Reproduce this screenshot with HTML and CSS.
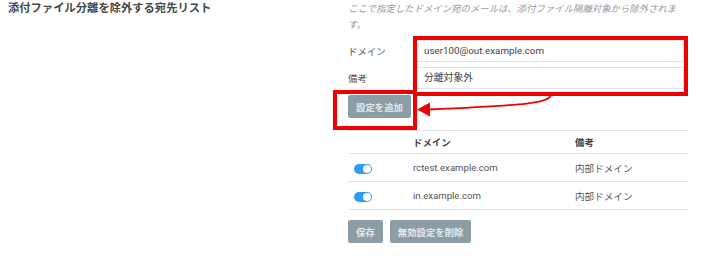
FILE: index.html
```html
<!DOCTYPE html>
<html lang="ja">
<head>
<meta charset="utf-8">
<link rel="stylesheet" href="styles.css">
</head>
<body>
<div class="page">
  <h2 class="title">添付ファイル分離を除外する宛先リスト</h2>
  <div class="panel">
    <p class="desc">ここで指定したドメイン宛のメールは、添付ファイル隔離対象から除外されます。</p>
    <div class="form">
      <label class="lbl">ドメイン</label>
      <div class="input">user100@out.example.com</div>
      <label class="lbl">備考</label>
      <div class="input">分離対象外</div>
    </div>
    <div class="add-row"><button class="btn">設定を追加</button></div>
    <table class="list">
      <thead>
        <tr><th class="c-tog"></th><th class="c-dom">ドメイン</th><th>備考</th></tr>
      </thead>
      <tbody>
        <tr><td class="c-tog"><span class="toggle"></span></td><td>rctest.example.com</td><td>内部ドメイン</td></tr>
        <tr><td class="c-tog"><span class="toggle"></span></td><td>in.example.com</td><td>内部ドメイン</td></tr>
      </tbody>
    </table>
    <div class="actions">
      <button class="btn">保存</button>
      <button class="btn">無効設定を削除</button>
    </div>
  </div>
</div>
<div class="mark mark-inputs"></div>
<div class="mark mark-btn"></div>
<svg class="arrow" width="711" height="280" viewBox="0 0 711 280">
  <path d="M551 95 C548 103 530 105 428 109.5" fill="none" stroke="#f20000" stroke-width="1.8"/>
  <polygon points="417,109.5 430,102.5 430,116.5" fill="#f20000"/>
</svg>
</body>
</html>
```
FILE: styles.css
```css
html, body {
  margin: 0;
  padding: 0;
  background: #fff;
}
body {
  font-family: Roboto, "Noto Sans CJK JP", sans-serif;
  color: #555;
  width: 711px;
  height: 280px;
  overflow: hidden;
  position: relative;
}
.page {
  display: grid;
  grid-template-columns: 348px 340px;
}
.title {
  margin: 0;
  padding-left: 8px;
  font-size: 11.3px;
  line-height: 18px;
  font-weight: 700;
  color: #484848;
}
.panel {
  display: flex;
  flex-direction: column;
  min-width: 0;
}
.desc {
  margin: 0;
  width: 332px;
  padding-top: 1px;
  font-size: 9.4px;
  line-height: 16px;
  font-style: italic;
  color: #9a9a9a;
}
.form {
  margin-top: 7px;
  display: grid;
  grid-template-columns: 68px 268px;
  row-gap: 5px;
  align-items: center;
}
.lbl {
  font-size: 9.4px;
  color: #555;
}
.input {
  height: 20px;
  line-height: 20px;
  border: 1px solid #dfe3e9;
  padding: 0 7px;
  font-size: 9.8px;
  color: #444;
}
.add-row {
  margin-top: 6px;
  display: flex;
}
.btn {
  height: 23px;
  padding: 0 8px;
  border: none;
  border-radius: 2px;
  background: #8b9ea6;
  color: #e4eaec;
  font-family: Roboto, "Noto Sans CJK JP", sans-serif;
  font-size: 9.4px;
  font-weight: 700;
}
.list {
  margin-top: 12px;
  width: 340px;
  border-collapse: collapse;
  font-size: 9.6px;
  color: #555;
}
.list th, .list td {
  text-align: left;
  border-top: 1px solid #e4e4e4;
  padding: 0;
}
.list thead th {
  height: 22px;
  font-weight: 700;
  color: #444;
  font-size: 9.4px;
}
.list tbody td {
  height: 27px;
  border-bottom: 1px solid #e4e4e4;
}
.c-tog {
  width: 65px;
}
.c-dom {
  width: 162px;
}
.toggle {
  display: block;
  margin-left: 6px;
  margin-top: 2px;
  width: 18px;
  height: 10px;
  border-radius: 5px;
  background: #2f9df2;
  position: relative;
}
.toggle::after {
  content: "";
  position: absolute;
  right: 1px;
  top: 1px;
  width: 8px;
  height: 8px;
  border-radius: 50%;
  background: #fff;
}
.actions {
  margin-top: 10px;
  display: flex;
  gap: 7px;
}
.mark {
  position: absolute;
  border: 4px solid #f20000;
  box-sizing: border-box;
}
.mark-inputs {
  left: 413px;
  top: 36px;
  width: 275px;
  height: 60px;
}
.mark-btn {
  left: 333px;
  top: 90px;
  width: 84px;
  height: 40px;
}
.arrow {
  position: absolute;
  left: 0;
  top: 0;
  pointer-events: none;
}
```
